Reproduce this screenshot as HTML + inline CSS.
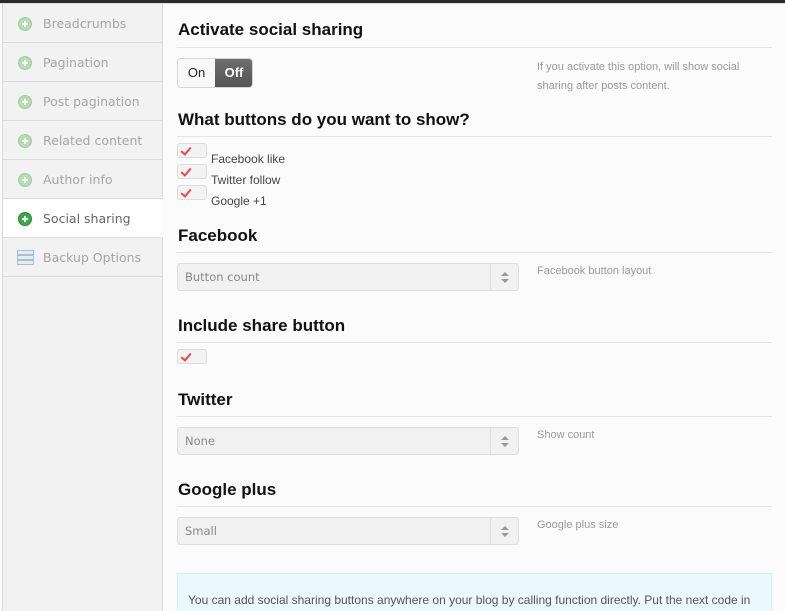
<!DOCTYPE html>
<html style="width:785px;height:611px;overflow:hidden"><head><meta charset="utf-8"><style>
*{margin:0;padding:0;box-sizing:border-box}
body{width:785px;height:611px;overflow:hidden;background:#fbfbfb;font-family:"Liberation Sans",sans-serif;position:relative}
.top{position:absolute;left:0;top:0;width:785px;height:3px;background:#2b2b2b}
.top2{position:absolute;left:0;top:3px;width:785px;height:1px;background:#ddd}
.side{position:absolute;left:2px;top:4px;width:161px;height:607px;background:#f2f2f2;border-left:1px solid #d9d9d9;border-right:1px solid #d9d9d9}
.it{position:absolute;left:0;width:159px;height:39px;border-bottom:1px solid #dcdcdc;font-family:"DejaVu Sans","Liberation Sans",sans-serif;font-size:12.5px;color:#a5a5a5;line-height:40px;padding-left:40px}
.it.act{background:#fff;color:#666;width:160px}
.ic{position:absolute;left:15px;top:13px;width:14px;height:14px;border-radius:50%;background:#b4ddb4;border:1px solid #9cd19c}
.ic:before{content:"";position:absolute;left:3px;top:5px;width:6px;height:2px;background:#fff}
.ic:after{content:"";position:absolute;left:5px;top:3px;width:2px;height:6px;background:#fff}
.act .ic{background:#3aaa45;border-color:#2a8a35}
h2{position:absolute;left:178px;font-size:17px;font-weight:bold;color:#111;letter-spacing:0}
.hr{position:absolute;left:177px;width:595px;height:1px;background:#e5e5e5}
.desc{position:absolute;left:537px;font-size:11px;color:#999;line-height:19px}
.cb{position:absolute;left:177px;width:30px;height:15px;border:1px solid #ddd;border-radius:3px;background:#f3f3f3}
.cb:after{content:"";position:absolute;left:5px;top:1px;width:4px;height:8px;border-right:2.5px solid #f0444a;border-bottom:2.5px solid #f0444a;transform:rotate(40deg)}
.lb{position:absolute;left:211px;font-size:12px;color:#444}
.sel{position:absolute;left:177px;width:342px;height:28px;border:1px solid #ddd;border-radius:4px;background:#f1f1f1;font-family:"DejaVu Sans",sans-serif;font-size:11.5px;color:#888;line-height:26px;padding-left:7px}
.sel:before{content:"";position:absolute;right:27px;top:0;width:1px;height:26px;background:#e2e2e2}
.sel:after{content:"";position:absolute;right:9px;top:8px;width:0;height:0;border-left:4px solid transparent;border-right:4px solid transparent;border-bottom:4px solid #999}
.sel i{position:absolute;right:9px;top:15px;width:0;height:0;border-left:4px solid transparent;border-right:4px solid transparent;border-top:4px solid #999}
</style></head><body>
<div class="top"></div><div class="top2"></div>
<div class="side">
<div class="it" style="top:0"><span class="ic"></span>Breadcrumbs</div>
<div class="it" style="top:39px"><span class="ic"></span>Pagination</div>
<div class="it" style="top:78px"><span class="ic"></span>Post pagination</div>
<div class="it" style="top:117px"><span class="ic"></span>Related content</div>
<div class="it" style="top:156px"><span class="ic"></span>Author info</div>
<div class="it act" style="top:195px"><span class="ic"></span>Social sharing</div>
<div class="it" style="top:234px"><svg style="position:absolute;left:14px;top:12px" width="17" height="16"><g fill="#e2ecf2" stroke="#a9bfcc"><rect x="0.5" y="0.5" width="16" height="4"/><rect x="0.5" y="5.5" width="16" height="4"/><rect x="0.5" y="10.5" width="16" height="4"/></g></svg>Backup Options</div>
</div>

<h2 style="top:20px">Activate social sharing</h2>
<div class="hr" style="top:47px"></div>
<div style="position:absolute;left:177px;top:58px;width:76px;height:30px;border:1px solid #d5d5d5;border-radius:4px;background:#f8f8f8;overflow:hidden">
<div style="position:absolute;left:0;top:0;width:37px;height:28px;font-size:13px;color:#222;line-height:28px;text-align:center">On</div>
<div style="position:absolute;left:37px;top:0;width:38px;height:28px;background:linear-gradient(#6e6e6e,#555);font-size:13px;color:#fff;font-weight:bold;line-height:28px;text-align:center">Off</div>
</div>
<div class="desc" style="top:58px">If you activate this option, will show social<br>sharing after posts content.</div>

<h2 style="top:110px">What buttons do you want to show?</h2>
<div class="hr" style="top:136px"></div>
<div class="cb" style="top:143px"></div><div class="lb" style="top:152px">Facebook like</div>
<div class="cb" style="top:164px"></div><div class="lb" style="top:173px">Twitter follow</div>
<div class="cb" style="top:185px"></div><div class="lb" style="top:194px">Google +1</div>

<h2 style="top:226px">Facebook</h2>
<div class="hr" style="top:252px"></div>
<div class="sel" style="top:263px">Button count<i></i></div>
<div class="desc" style="top:262px">Facebook button layout</div>

<h2 style="top:316px">Include share button</h2>
<div class="hr" style="top:342px"></div>
<div class="cb" style="top:349px"></div>

<h2 style="top:390px">Twitter</h2>
<div class="hr" style="top:416px"></div>
<div class="sel" style="top:427px">None<i></i></div>
<div class="desc" style="top:426px">Show count</div>

<h2 style="top:480px">Google plus</h2>
<div class="hr" style="top:506px"></div>
<div class="sel" style="top:517px">Small<i></i></div>
<div class="desc" style="top:516px">Google plus size</div>

<div style="position:absolute;left:177px;top:573px;width:595px;height:50px;background:#ebf8fe;border:1px solid #cdeefb"></div>
<div style="position:absolute;left:188px;top:593px;font-size:12px;color:#555;white-space:nowrap">You can add social sharing buttons anywhere on your blog by calling function directly. Put the next code in</div>
</body></html>
